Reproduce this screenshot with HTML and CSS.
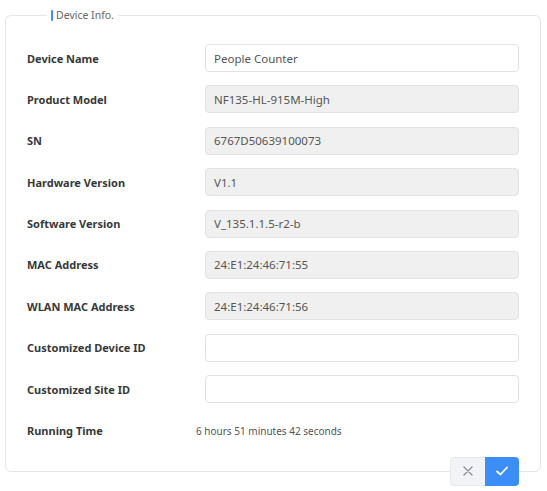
FILE: index.html
```html
<!DOCTYPE html>
<html>
<head>
<meta charset="utf-8">
<link rel="stylesheet" href="styles.css">
</head>
<body>
<div class="page">
  <fieldset class="panel">
    <legend class="legend"><span class="legend-bar"></span>Device Info.</legend>
    <div class="form">
      <div class="row"><label class="label">Device Name</label><input class="field" type="text" value="People Counter"></div>
      <div class="row"><label class="label">Product Model</label><input class="field disabled" type="text" value="NF135-HL-915M-High" disabled></div>
      <div class="row"><label class="label">SN</label><input class="field disabled" type="text" value="6767D50639100073" disabled></div>
      <div class="row"><label class="label">Hardware Version</label><input class="field disabled" type="text" value="V1.1" disabled></div>
      <div class="row"><label class="label">Software Version</label><input class="field disabled" type="text" value="V_135.1.1.5-r2-b" disabled></div>
      <div class="row"><label class="label">MAC Address</label><input class="field disabled" type="text" value="24:E1:24:46:71:55" disabled></div>
      <div class="row"><label class="label">WLAN MAC Address</label><input class="field disabled" type="text" value="24:E1:24:46:71:56" disabled></div>
      <div class="row"><label class="label">Customized Device ID</label><input class="field" type="text" value=""></div>
      <div class="row"><label class="label">Customized Site ID</label><input class="field" type="text" value=""></div>
      <div class="row"><label class="label">Running Time</label><span class="value">6 hours 51 minutes 42 seconds</span></div>
    </div>
  </fieldset>
  <div class="actions">
    <button class="btn btn-cancel" type="button">
      <svg width="12" height="12" viewBox="0 0 12 12"><path d="M2 2 L10 10 M10 2 L2 10" stroke="#8a8f99" stroke-width="1.4" fill="none" stroke-linecap="round"/></svg>
    </button>
    <button class="btn btn-ok" type="button">
      <svg width="14" height="12" viewBox="0 0 14 12"><path d="M2 6.5 L5.5 9.5 L12 2.5" stroke="#ffffff" stroke-width="1.8" fill="none" stroke-linecap="round" stroke-linejoin="round"/></svg>
    </button>
  </div>
</div>
</body>
</html>
```
FILE: styles.css
```css
* { box-sizing: border-box; }
html, body { margin: 0; padding: 0; background: #ffffff; }
body { font-family: "Noto Sans", "Open Sans", sans-serif; color: #333; }
.page { padding: 9px 6px 0 5px; width: 547px; }
.panel {
  margin: 0;
  border: 1px solid #e6e6e6;
  border-radius: 6px;
  padding: 23px 21px 26px 21px;
  width: 536px;
  min-width: 0;
}
.legend {
  margin-left: 20px;
  padding: 0 4px 0 4px;
  font-size: 10.5px;
  color: #666;
  line-height: 12px;
  display: flex;
  align-items: center;
}
.legend-bar {
  display: inline-block;
  width: 2px;
  height: 11px;
  background: #3a8ef6;
  margin-right: 3px;
  border-radius: 1px;
}
.form { display: flex; flex-direction: column; gap: 13.4px; }
.row { display: flex; align-items: center; height: 28px; }
.label {
  width: 178px;
  flex: none;
  font-size: 11px;
  font-weight: 700;
  color: #383838;
}
.field {
  width: 314px;
  height: 28px;
  border: 1px solid #e2e2e2;
  border-radius: 4px;
  padding: 0 8px;
  font-family: inherit;
  font-size: 11.5px;
  color: #555;
  background: #fff;
  outline: none;
}
.field.disabled { background: #f0f0f0; color: #555; -webkit-text-fill-color: #555; opacity: 1; }
.value { font-size: 10px; color: #555; margin-left: -9px; }
.actions {
  display: flex;
  justify-content: flex-end;
  margin-top: -15px;
  padding-right: 22px;
  position: relative;
}
.btn {
  width: 34.5px;
  height: 29px;
  border: none;
  padding: 0;
  display: flex;
  align-items: center;
  justify-content: center;
}
.btn-cancel { background: #f2f3f7; border: 1px solid #e6e8ee; border-right: none; border-radius: 4px 0 0 4px; }
.btn-ok { background: #3a8ef6; border-radius: 0 4px 4px 0; }
```
